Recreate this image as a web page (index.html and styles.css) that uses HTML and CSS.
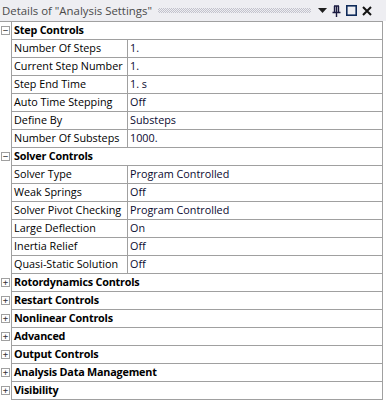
FILE: index.html
```html
<!DOCTYPE html>
<html lang="en">
<head>
    <meta charset="UTF-8">
    <title>Details of "Analysis Settings"</title>
    <link rel="stylesheet" href="styles.css">
</head>
<body>
    <div class="panel">
        <div class="titlebar">
            <span class="title">Details of "Analysis Settings"</span>
            <span class="grip"></span>
            <span class="tools">
                <svg width="9" height="6" viewBox="0 0 9 6"><path d="M0 0 H9 L4.5 5 Z" fill="#1e1e1e"/></svg>
                <svg width="9" height="12" viewBox="0 0 9 12"><path d="M2 1 H7 M2.5 1 V7 M6.5 1 V7 M4.5 1 V7 M0.5 7.5 H8.5 M4.5 7.5 V12" stroke="#1a1a40" stroke-width="1.4" fill="none"/></svg>
                <svg width="11" height="11" viewBox="0 0 11 11"><rect x="0.8" y="0.8" width="9.4" height="9.4" fill="none" stroke="#0e2a5a" stroke-width="1.6"/></svg>
                <svg width="10" height="10" viewBox="0 0 10 10"><path d="M1 1 L9 9 M9 1 L1 9" stroke="#111" stroke-width="2"/></svg>
            </span>
        </div>

        <div class="grid">
            <div class="row group"><span class="toggle">&minus;</span><div class="cell head">Step Controls</div></div>
            <div class="row"><span class="gutter"></span><div class="cell name">Number Of Steps</div><div class="cell value">1.</div></div>
            <div class="row"><span class="gutter"></span><div class="cell name">Current Step Number</div><div class="cell value">1.</div></div>
            <div class="row"><span class="gutter"></span><div class="cell name">Step End Time</div><div class="cell value">1. s</div></div>
            <div class="row"><span class="gutter"></span><div class="cell name">Auto Time Stepping</div><div class="cell value">Off</div></div>
            <div class="row"><span class="gutter"></span><div class="cell name">Define By</div><div class="cell value">Substeps</div></div>
            <div class="row"><span class="gutter"></span><div class="cell name">Number Of Substeps</div><div class="cell value">1000.</div></div>

            <div class="row group"><span class="toggle">&minus;</span><div class="cell head">Solver Controls</div></div>
            <div class="row"><span class="gutter"></span><div class="cell name">Solver Type</div><div class="cell value">Program Controlled</div></div>
            <div class="row"><span class="gutter"></span><div class="cell name">Weak Springs</div><div class="cell value">Off</div></div>
            <div class="row"><span class="gutter"></span><div class="cell name">Solver Pivot Checking</div><div class="cell value">Program Controlled</div></div>
            <div class="row"><span class="gutter"></span><div class="cell name">Large Deflection</div><div class="cell value">On</div></div>
            <div class="row"><span class="gutter"></span><div class="cell name">Inertia Relief</div><div class="cell value">Off</div></div>
            <div class="row"><span class="gutter"></span><div class="cell name">Quasi-Static Solution</div><div class="cell value">Off</div></div>

            <div class="row group"><span class="toggle">+</span><div class="cell head">Rotordynamics Controls</div></div>
            <div class="row group"><span class="toggle">+</span><div class="cell head">Restart Controls</div></div>
            <div class="row group"><span class="toggle">+</span><div class="cell head">Nonlinear Controls</div></div>
            <div class="row group"><span class="toggle">+</span><div class="cell head">Advanced</div></div>
            <div class="row group"><span class="toggle">+</span><div class="cell head">Output Controls</div></div>
            <div class="row group"><span class="toggle">+</span><div class="cell head">Analysis Data Management</div></div>
            <div class="row group"><span class="toggle">+</span><div class="cell head">Visibility</div></div>
        </div>
    </div>
</body>
</html>
```

FILE: styles.css
```css
body {
    margin: 0;
    background-color: #fff;
    font-family: "Open Sans", "Noto Sans", sans-serif;
    font-size: 10.8px;
    color: #000;
}
.panel {
    width: 386px;
    height: 405px;
    background-color: #fff;
}
.titlebar {
    height: 21px;
    display: flex;
    align-items: center;
    background-color: #eeeef2;
    padding-left: 2px;
    box-sizing: border-box;
}
.title {
    color: #4a4a4a;
    font-size: 11.4px;
    white-space: nowrap;
}
.grip {
    flex: 1;
    height: 5px;
    margin: 0 7px 0 6px;
    background: repeating-conic-gradient(#c2c2cc 0 25%, transparent 0 50%) 0 0 / 2px 2px;
}
.tools {
    display: flex;
    align-items: center;
    gap: 5px;
    padding-right: 14px;
}
.grid {
    width: 383px;
    border-top: 1px solid #a0a0a0;
}
.row {
    display: flex;
    height: 18px;
}
.toggle, .gutter {
    width: 11px;
    flex: none;
    display: flex;
    align-items: center;
    justify-content: center;
}
.toggle {
    font-family: "DejaVu Sans Mono", monospace;
    font-size: 9px;
    line-height: 7px;
}
.row.group .toggle {
    box-sizing: border-box;
    width: 9px;
    height: 9px;
    margin: 4px 1px 0 1px;
    border: 1px solid #a0a0a0;
    color: #333;
}
.cell {
    height: 17px;
    line-height: 16px;
    border-bottom: 1px solid #a0a0a0;
    border-left: 1px solid #a0a0a0;
    padding-left: 2px;
    white-space: nowrap;
    overflow: hidden;
}
.head {
    flex: 1;
    font-weight: bold;
    letter-spacing: -0.2px;
    border-right: 1px solid #a0a0a0;
}
.name {
    width: 113px;
    flex: none;
}
.value {
    flex: 1;
    color: #0a0a30;
    border-right: 1px solid #a0a0a0;
}
```
